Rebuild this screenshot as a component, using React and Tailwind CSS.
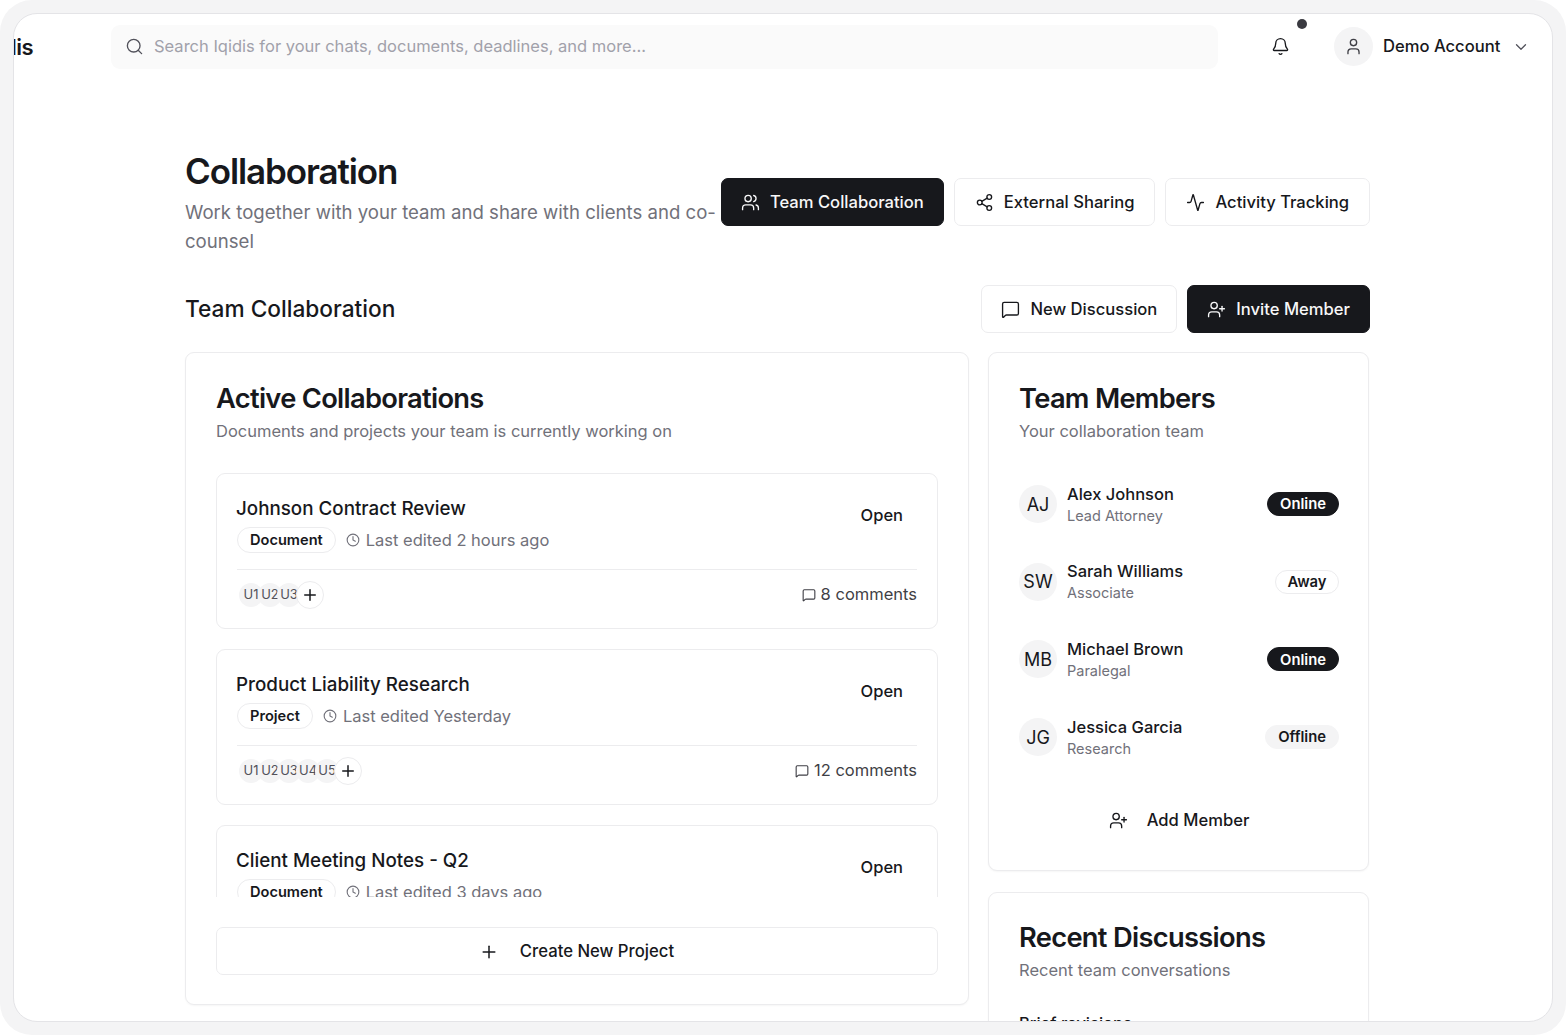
import React from 'react';
import { Search, Bell, User, ChevronDown, Users, Share2, Activity, MessageSquare, UserPlus, Clock, Plus } from 'lucide-react';

const projects = [
  { title: 'Johnson Contract Review', type: 'Document', edited: 'Last edited 2 hours ago', users: ['U1', 'U2', 'U3'], comments: '8 comments' },
  { title: 'Product Liability Research', type: 'Project', edited: 'Last edited Yesterday', users: ['U1', 'U2', 'U3', 'U4', 'U5'], comments: '12 comments' },
  { title: 'Client Meeting Notes - Q2', type: 'Document', edited: 'Last edited 3 days ago', users: ['U1', 'U2'], comments: '5 comments' },
];

const members = [
  { initials: 'AJ', name: 'Alex Johnson', role: 'Lead Attorney', status: 'Online' },
  { initials: 'SW', name: 'Sarah Williams', role: 'Associate', status: 'Away' },
  { initials: 'MB', name: 'Michael Brown', role: 'Paralegal', status: 'Online' },
  { initials: 'JG', name: 'Jessica Garcia', role: 'Research', status: 'Offline' },
];

const statusStyles = {
  Online: 'bg-[#17181c] text-white border-[#17181c] px-[12px]',
  Away: 'bg-white text-[#17181c] border-[#ececee] px-[11.5px]',
  Offline: 'bg-[#f4f4f5] text-[#17181c] border-[#f4f4f5] px-[12px]',
};

const Button = ({ icon: Icon, label, dark, wide }) => (
  <button
    className={`flex h-[48px] shrink-0 items-center gap-[10px] rounded-[7px] border text-[16.6px] font-medium ${wide ? 'px-[20px]' : 'px-[19px]'} ${
      dark ? 'border-[#17181c] bg-[#17181c] text-[#f7f7f8]' : 'border-[#ececee] bg-white text-[#17181c]'
    }`}
  >
    <Icon size={19} strokeWidth={1.7} />
    {label}
  </button>
);

const CardHeader = ({ title, subtitle }) => (
  <div>
    <h3 className="text-[27.3px] font-semibold leading-[34px] tracking-[-0.7px] text-[#17181c]">{title}</h3>
    <p className="mt-[3px] text-[16.5px] leading-[24px] text-[#71717a]">{subtitle}</p>
  </div>
);

const ProjectCard = ({ project }) => (
  <div className="h-[156px] shrink-0 rounded-[9px] border border-[#ececee] px-[19px] pt-[20px]">
    <div className="flex items-start justify-between">
      <div>
        <h4 className="text-[18.8px] font-medium leading-[30px] text-[#17181c]">{project.title}</h4>
        <div className="mt-[3px] flex items-center gap-[10px]">
          <span className="ml-[1px] flex h-[26px] items-center rounded-full border border-[#ececee] px-[12px] pt-[1px] text-[14.6px] font-semibold text-[#17181c]">
            {project.type}
          </span>
          <span className="flex items-center gap-[6px] text-[16.5px] text-[#71717a]">
            <Clock size={14} strokeWidth={1.9} />
            {project.edited}
          </span>
        </div>
      </div>
      <span className="mr-[15px] mt-[6px] text-[16.5px] font-medium leading-[30px] text-[#17181c]">Open</span>
    </div>
    <div className="mx-[1px] mt-[16px] flex h-[50px] items-center justify-between border-t border-[#ececee]">
      <div className="flex items-center pl-[2px]">
        {project.users.map((u) => (
          <span
            key={u}
            className="-mr-[5px] flex h-[24px] w-[24px] items-center justify-center overflow-hidden rounded-full bg-[#f4f4f5] text-[13px] text-[#52525b]"
          >
            {u}
          </span>
        ))}
        <span className="relative flex h-[28px] w-[28px] items-center justify-center rounded-full border border-[#ececee] bg-white text-[#17181c]">
          <Plus size={18} strokeWidth={2} />
        </span>
      </div>
      <span className="flex items-center gap-[5px] text-[16.5px] text-[#3f3f46]">
        <MessageSquare size={14} strokeWidth={1.9} />
        {project.comments}
      </span>
    </div>
  </div>
);

const MemberRow = ({ member }) => (
  <div className="flex h-[38px] items-center justify-between">
    <div className="flex items-center gap-[10px]">
      <span className="flex h-[38px] w-[38px] items-center justify-center rounded-full bg-[#f4f4f5] text-[18px] text-[#17181c]">
        {member.initials}
      </span>
      <div>
        <p className="text-[16.5px] font-medium leading-[22px] text-[#17181c]">{member.name}</p>
        <p className="text-[14.5px] leading-[21px] text-[#71717a]">{member.role}</p>
      </div>
    </div>
    <span className={`flex h-[24px] items-center rounded-full border pt-[1px] text-[14.8px] font-semibold ${statusStyles[member.status]}`}>
      {member.status}
    </span>
  </div>
);

const App = () => {
  return (
    <div className="h-[1035px] w-[1566px] overflow-hidden bg-white font-['Inter',sans-serif]">
      <div className="h-full rounded-[32px] bg-[#f4f4f5] p-[13px]">
        <div className="flex h-[1009px] flex-col overflow-hidden rounded-[24px] border border-[#e4e4e7] bg-white">
          {/* Header */}
          <header className="flex h-[66px] shrink-0 items-start pt-[11px]">
            <div className="flex h-[44px] w-[97px] shrink-0 items-center justify-end overflow-hidden pr-[78px]">
              <span className="shrink-0 text-[22px] font-semibold tracking-[-0.5px] text-[#17181c]">Iqidis</span>
            </div>
            <div className="flex h-[44px] w-[1107px] shrink-0 items-center gap-[10px] rounded-[9px] bg-[#fafafa] px-[14px] pb-[1px] text-[16.5px] text-[#a1a1aa]">
              <Search size={19} strokeWidth={1.7} className="text-[#52525b]" />
              Search Iqidis for your chats, documents, deadlines, and more...
            </div>
            <div className="relative ml-[53px] mt-[12px] text-[#17181c]">
              <Bell size={19} strokeWidth={1.7} />
              <span className="absolute -top-[18px] left-[17px] h-[10px] w-[10px] translate-x-[9px] rounded-full bg-[#3a3a40]"></span>
            </div>
            <div className="ml-[44px] mt-[2px] flex items-center">
              <span className="flex h-[39px] w-[39px] items-center justify-center rounded-full bg-[#f4f4f5] text-[#3f3f46]">
                <User size={19} strokeWidth={1.7} />
              </span>
              <span className="ml-[10px] text-[16.6px] font-medium text-[#17181c]">Demo Account</span>
              <ChevronDown size={18} strokeWidth={1.7} className="ml-[12px] text-[#52525b]" />
            </div>
          </header>

          {/* Page content */}
          <main className="ml-[171px] w-[1185px] flex-1 self-start pt-[71px]">
            <div className="flex items-start justify-between">
              <div className="w-[536px]">
                <h1 className="text-[35px] font-semibold leading-[40px] tracking-[-1.1px] text-[#17181c]">Collaboration</h1>
                <p className="mt-[7px] text-[18.6px] leading-[29px] text-[#71717a]">
                  Work together with your team and share with clients and co-counsel
                </p>
              </div>
              <div className="mt-[27px] flex gap-[10px]">
                <Button icon={Users} label="Team Collaboration" dark />
                <Button icon={Share2} label="External Sharing" wide />
                <Button icon={Activity} label="Activity Tracking" wide />
              </div>
            </div>

            <div className="mt-[29px] flex items-center justify-between">
              <h2 className="text-[22.7px] font-medium leading-[32px] text-[#17181c]">Team Collaboration</h2>
              <div className="flex gap-[10px]">
                <Button icon={MessageSquare} label="New Discussion" />
                <Button icon={UserPlus} label="Invite Member" dark />
              </div>
            </div>

            <div className="mt-[19px] flex items-start gap-[19px]">
              {/* Active collaborations */}
              <section className="h-[653px] w-[784px] shrink-0 rounded-[9px] border border-[#ececee] bg-white px-[30px] pt-[29px] shadow-[0_1px_2px_rgba(0,0,0,0.04)]">
                <CardHeader title="Active Collaborations" subtitle="Documents and projects your team is currently working on" />
                <div className="mt-[30px] flex h-[424px] flex-col gap-[20px] overflow-hidden">
                  {projects.map((p) => (
                    <ProjectCard key={p.title} project={p} />
                  ))}
                </div>
                <button className="mt-[30px] flex h-[48px] w-full items-center justify-center gap-[21px] rounded-[7px] border border-[#ececee] bg-white pr-[1px] pt-[1px] text-[16.7px] font-medium text-[#17181c]">
                  <Plus size={20} strokeWidth={1.8} />
                  Create New Project
                </button>
              </section>

              {/* Right column */}
              <div className="flex w-[381px] shrink-0 flex-col gap-[21px]">
                <section className="h-[519px] rounded-[9px] border border-[#ececee] bg-white pl-[30px] pr-[29px] pt-[29px] shadow-[0_1px_2px_rgba(0,0,0,0.04)]">
                  <CardHeader title="Team Members" subtitle="Your collaboration team" />
                  <div className="mt-[42px] flex flex-col gap-[39.7px]">
                    {members.map((m) => (
                      <MemberRow key={m.name} member={m} />
                    ))}
                  </div>
                  <button className="mt-[40px] flex h-[48px] w-full items-center justify-center gap-[19px] text-[16.6px] font-medium text-[#17181c]">
                    <UserPlus size={19} strokeWidth={1.7} />
                    Add Member
                  </button>
                </section>
                <section className="h-[400px] rounded-[9px] border border-[#ececee] bg-white pl-[30px] pr-[29px] pt-[28px] shadow-[0_1px_2px_rgba(0,0,0,0.04)]">
                  <CardHeader title="Recent Discussions" subtitle="Recent team conversations" />
                  <p className="mt-[29px] text-[16.5px] font-medium leading-[24px] text-[#17181c]">Brief revisions</p>
                </section>
              </div>
            </div>
          </main>
        </div>
      </div>
    </div>
  );
};

export default App;
